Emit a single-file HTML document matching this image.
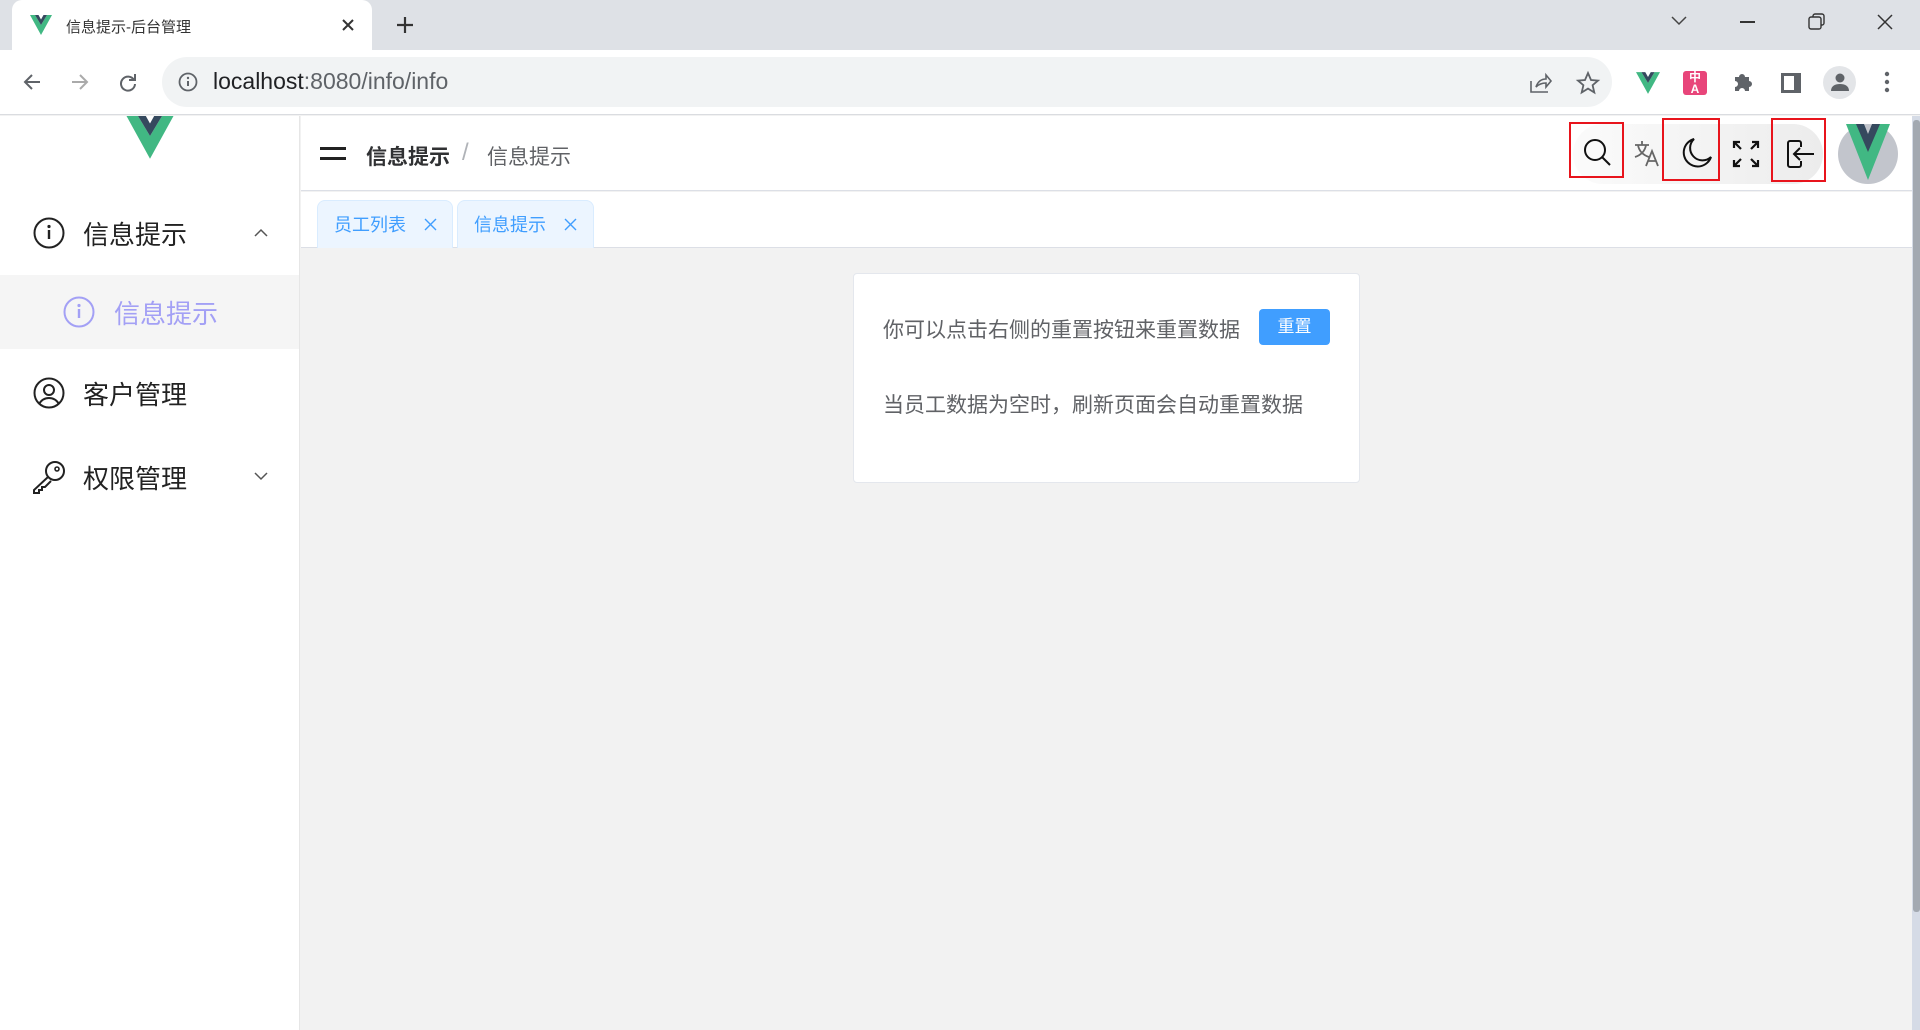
<!DOCTYPE html>
<html><head><meta charset="utf-8">
<style>
*{margin:0;padding:0;box-sizing:border-box}
body{width:1920px;height:1030px;overflow:hidden;background:#f2f2f2;font-family:"Liberation Sans","Noto Sans CJK SC",sans-serif;position:relative}
.abs{position:absolute}
svg{position:absolute;overflow:visible}
</style></head><body>
<!-- browser tab bar -->
<div class="abs" style="left:0;top:0;width:1920px;height:50px;background:#dee1e6"></div>
<div class="abs" style="left:12px;top:0;width:360px;height:52px;background:#fff;border-radius:10px 10px 0 0"></div>
<svg style="left:30px;top:15px" width="22" height="20" viewBox="0 0 22 20"><path d="M0 0h5l6 10 6-10h5L11 20z" fill="#41b883"/><path d="M5 0h3.5L11 4.5 13.5 0H17l-6 10z" fill="#35495e"/></svg>
<div class="abs" style="left:66px;top:16px;font-size:15px;color:#333">信息提示-后台管理</div>
<svg style="left:341px;top:18px" width="14" height="14"><path d="M2 2l10 10M12 2L2 12" stroke="#333" stroke-width="2"/></svg>
<svg style="left:396px;top:16px" width="18" height="18"><path d="M9 1v16M1 9h16" stroke="#333" stroke-width="2.2"/></svg>
<svg style="left:1671px;top:16px" width="16" height="10"><path d="M1 1l7 7 7-7" stroke="#444" stroke-width="1.5" fill="none"/></svg>
<div class="abs" style="left:1740px;top:21px;width:15px;height:1.5px;background:#333"></div>
<svg style="left:1808px;top:13px" width="18" height="18"><rect x="1" y="4" width="12" height="12" rx="2" stroke="#333" stroke-width="1.4" fill="none"/><path d="M5 4V3a2 2 0 0 1 2-2h7a2 2 0 0 1 2 2v7a2 2 0 0 1-2 2h-1" stroke="#333" stroke-width="1.4" fill="none"/></svg>
<svg style="left:1877px;top:14px" width="16" height="16"><path d="M1 1l14 14M15 1L1 15" stroke="#333" stroke-width="1.5"/></svg>
<!-- address row -->
<div class="abs" style="left:0;top:50px;width:1920px;height:65px;background:#fff;border-bottom:1px solid #dadce0"></div>
<svg style="left:22px;top:72px" width="20" height="20"><path d="M18 10H3M10 3l-7 7 7 7" stroke="#5f6368" stroke-width="2" fill="none"/></svg>
<svg style="left:70px;top:72px" width="20" height="20"><path d="M2 10h15M10 3l7 7-7 7" stroke="#aaa" stroke-width="2" fill="none"/></svg>
<svg style="left:118px;top:72px" width="20" height="20"><path d="M16 8A7 7 0 1 0 17 12" stroke="#5f6368" stroke-width="2" fill="none"/><path d="M17 2v6h-6" fill="none" stroke="#5f6368" stroke-width="2"/></svg>
<div class="abs" style="left:162px;top:57px;width:1450px;height:50px;background:#f1f3f4;border-radius:25px"></div>
<svg style="left:178px;top:72px" width="20" height="20"><circle cx="10" cy="10" r="8.5" stroke="#5f6368" stroke-width="1.8" fill="none"/><path d="M10 9v5" stroke="#5f6368" stroke-width="2"/><circle cx="10" cy="6" r="1.2" fill="#5f6368"/></svg>
<div class="abs" style="left:213px;top:68px;font-size:23px;color:#202124">localhost<span style="color:#5f6368">:8080/info/info</span></div>
<svg style="left:1528px;top:72px" width="24" height="22"><path d="M3 9v11h17M8 15c2-6 6-8 10-8V3l5 6-5 6v-4c-4 0-7 1-10 4z" stroke="#5f6368" stroke-width="1.6" fill="none"/></svg>
<svg style="left:1576px;top:71px" width="24" height="24"><path d="M12 2l3 7 7 .6-5.4 4.6 1.7 7.3L12 17.6 5.7 21.5l1.7-7.3L2 9.6 9 9z" stroke="#5f6368" stroke-width="1.8" fill="none"/></svg>
<svg style="left:1636px;top:72px" width="24" height="22" viewBox="0 0 22 20"><path d="M0 0h5l6 10 6-10h5L11 20z" fill="#41b883"/><path d="M5 0h3.5L11 4.5 13.5 0H17l-6 10z" fill="#35495e"/></svg>
<div class="abs" style="left:1683px;top:71px;width:24px;height:24px;background:#e8457a;border-radius:3px;color:#fff;font-size:12px;line-height:12px;text-align:center;font-weight:bold">中<br>A</div>
<svg style="left:1731px;top:70px" width="24" height="24"><path d="M4 7h4a3 3 0 0 1 6 0h4v4a3 3 0 0 1 0 6v4H14a3 3 0 0 0-6 0H4v-4a3 3 0 0 0 0-6z" fill="#5f6368"/></svg>
<svg style="left:1780px;top:72px" width="22" height="22"><rect x="1" y="1" width="20" height="20" fill="#5f6368"/><rect x="4" y="4" width="10" height="14" fill="#fff"/></svg>
<div class="abs" style="left:1823px;top:66px;width:33px;height:33px;border-radius:50%;background:#e3e5e8"></div>
<svg style="left:1829px;top:71px" width="22" height="22"><circle cx="11" cy="7" r="4.5" fill="#5f6368"/><path d="M2 20c0-5 4-7 9-7s9 2 9 7z" fill="#5f6368"/></svg>
<svg style="left:1884px;top:71px" width="6" height="22"><circle cx="3" cy="3" r="2.2" fill="#5f6368"/><circle cx="3" cy="11" r="2.2" fill="#5f6368"/><circle cx="3" cy="19" r="2.2" fill="#5f6368"/></svg>
<!-- sidebar -->
<div class="abs" style="left:0;top:116px;width:300px;height:914px;background:#fff;border-right:1px solid #e6e6e6"></div>
<svg style="left:125px;top:112px;clip-path:inset(4px 0 0 0)" width="50" height="48" viewBox="0 0 22 20"><path d="M0 0h5l6 10 6-10h5L11 20z" fill="#41b883"/><path d="M5 0h3.5L11 4.5 13.5 0H17l-6 10z" fill="#35495e"/></svg>
<svg style="left:33px;top:217px" width="32" height="32"><circle cx="16" cy="16" r="14.5" stroke="#222" stroke-width="2" fill="none"/><path d="M16 13v9" stroke="#222" stroke-width="2.4"/><circle cx="16" cy="9.5" r="1.6" fill="#222"/></svg>
<div class="abs" style="left:83px;top:215px;font-size:26px;color:#222">信息提示</div>
<svg style="left:254px;top:228px" width="14" height="9"><path d="M1 8l6-6 6 6" stroke="#555" stroke-width="1.5" fill="none"/></svg>
<div class="abs" style="left:0;top:275px;width:299px;height:74px;background:#f5f5f5"></div>
<svg style="left:63px;top:296px" width="32" height="32"><circle cx="16" cy="16" r="14.5" stroke="#a3a0f5" stroke-width="2" fill="none"/><path d="M16 13v9" stroke="#a3a0f5" stroke-width="2.4"/><circle cx="16" cy="9.5" r="1.6" fill="#a3a0f5"/></svg>
<div class="abs" style="left:114px;top:294px;font-size:26px;color:#a3a0f5">信息提示</div>
<svg style="left:33px;top:377px" width="32" height="32"><circle cx="16" cy="16" r="14.5" stroke="#222" stroke-width="2" fill="none"/><circle cx="16" cy="13" r="5" stroke="#222" stroke-width="2" fill="none"/><path d="M6 27c3-5 7-6 10-6s7 1 10 6" stroke="#222" stroke-width="2" fill="none"/></svg>
<div class="abs" style="left:83px;top:375px;font-size:26px;color:#222">客户管理</div>
<svg style="left:32px;top:460px" width="34" height="34"><circle cx="23" cy="11" r="9" stroke="#222" stroke-width="2" fill="none"/><circle cx="25" cy="9" r="2" fill="none" stroke="#222" stroke-width="1.6"/><path d="M16 17L2 30v3h5v-3h3v-3h3l6-6" stroke="#222" stroke-width="2" fill="none"/></svg>
<div class="abs" style="left:83px;top:459px;font-size:26px;color:#222">权限管理</div>
<svg style="left:254px;top:472px" width="14" height="9"><path d="M1 1l6 6 6-6" stroke="#555" stroke-width="1.5" fill="none"/></svg>
<!-- header -->
<div class="abs" style="left:301px;top:116px;width:1611px;height:75px;background:#fff;border-bottom:1px solid #dcdfe6"></div>
<div class="abs" style="left:320px;top:147px;width:26px;height:3px;background:#222"></div>
<div class="abs" style="left:320px;top:157px;width:26px;height:3px;background:#222"></div>
<div class="abs" style="left:366px;top:141px;font-size:21px;color:#303133;font-weight:bold">信息提示</div>
<div class="abs" style="left:462px;top:139px;font-size:24px;color:#b0b3b8">/</div>
<div class="abs" style="left:487px;top:141px;font-size:21px;color:#606266">信息提示</div>
<div class="abs" style="left:1573px;top:124px;width:250px;height:60px;border-radius:30px;background:linear-gradient(90deg,#fbfbfb,#ececec)"></div>
<div class="abs" style="left:1569px;top:122px;width:55px;height:56px;border:2px solid #e8141c"></div>
<div class="abs" style="left:1662px;top:118px;width:58px;height:63px;border:2px solid #e8141c"></div>
<div class="abs" style="left:1771px;top:118px;width:55px;height:64px;border:2px solid #e8141c"></div>
<svg style="left:1583px;top:138px" width="30" height="30"><circle cx="12" cy="12" r="10" stroke="#111" stroke-width="2" fill="none"/><path d="M19 19l8 8" stroke="#111" stroke-width="2"/></svg>
<svg style="left:1634px;top:140px" width="28" height="28"><path d="M1 5h14M8 1v4M4 5c1 6 5 10 11 12M12 5c-1 6-5 10-11 12" stroke="#666" stroke-width="1.8" fill="none"/><path d="M12 26l6-15 6 15M14.5 21h7" stroke="#666" stroke-width="1.8" fill="none"/></svg>
<svg style="left:1681px;top:137px" width="32" height="32"><path d="M13 2A14 14 0 1 0 30 20 11 11 0 0 1 13 2z" stroke="#111" stroke-width="2" fill="none"/></svg>
<svg style="left:1732px;top:140px" width="28" height="28"><path d="M2 8V2h6M2 2l7 7M20 2h6v6M26 2l-7 7M2 20v6h6M2 26l7-7M26 20v6h-6M26 26l-7-7" stroke="#111" stroke-width="2.2" fill="none"/></svg>
<svg style="left:1786px;top:139px" width="30" height="30"><path d="M13 2H4a2 2 0 0 0-2 2v22a2 2 0 0 0 2 2h9a2 2 0 0 0 2-2v-4M15 8V4a2 2 0 0 0-2-2" stroke="#111" stroke-width="2" fill="none"/><path d="M28 15H8M14 9l-6 6 6 6" stroke="#111" stroke-width="2" fill="none"/></svg>
<div class="abs" style="left:1838px;top:124px;width:60px;height:60px;border-radius:50%;background:#c2c5cc;overflow:hidden"></div>
<svg style="left:1846px;top:124px" width="44" height="56" viewBox="0 0 22 28"><path d="M0 0h6l5 10 5-10h6L11 28z" fill="#41b883"/><path d="M5 0h4l2 5 2-5h4l-6 14z" fill="#35495e"/></svg>
<!-- tabs row -->
<div class="abs" style="left:301px;top:192px;width:1611px;height:56px;background:#fff;border-bottom:1px solid #dcdfe6"></div>
<div class="abs" style="left:317px;top:200px;width:136px;height:48px;background:#ecf5ff;border:1px solid #d9ecff;border-bottom:none;border-radius:8px 8px 0 0"></div>
<div class="abs" style="left:334px;top:211px;font-size:18px;color:#409eff">员工列表</div>
<svg style="left:424px;top:218px" width="13" height="13"><path d="M1 1l11 11M12 1L1 12" stroke="#409eff" stroke-width="1.4"/></svg>
<div class="abs" style="left:457px;top:200px;width:137px;height:48px;background:#ecf5ff;border:1px solid #d9ecff;border-bottom:none;border-radius:8px 8px 0 0"></div>
<div class="abs" style="left:474px;top:211px;font-size:18px;color:#409eff">信息提示</div>
<svg style="left:564px;top:218px" width="13" height="13"><path d="M1 1l11 11M12 1L1 12" stroke="#409eff" stroke-width="1.4"/></svg>
<!-- card -->
<div class="abs" style="left:853px;top:273px;width:507px;height:210px;background:#fff;border:1px solid #e4e7ed;border-radius:4px"></div>
<div class="abs" style="left:883px;top:314px;font-size:21px;color:#606266">你可以点击右侧的重置按钮来重置数据</div>
<div class="abs" style="left:1259px;top:309px;width:71px;height:36px;background:#409eff;border-radius:4px;color:#fff;font-size:17px;text-align:center;line-height:36px">重置</div>
<div class="abs" style="left:883px;top:389px;font-size:21px;color:#606266">当员工数据为空时，刷新页面会自动重置数据</div>
<!-- scrollbar -->
<div class="abs" style="left:1912px;top:116px;width:8px;height:914px;background:#d5dbe6"></div>
<div class="abs" style="left:1913px;top:120px;width:7px;height:792px;background:#a3a9b1;border-radius:3px"></div>
</body></html>
